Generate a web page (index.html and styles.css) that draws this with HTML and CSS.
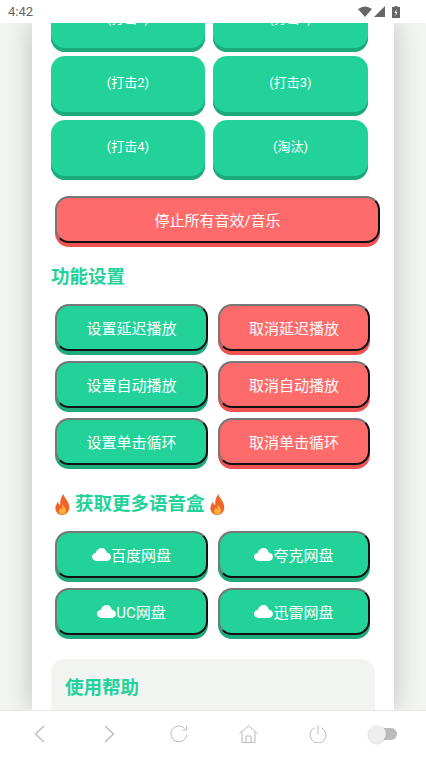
FILE: index.html
```html
<!DOCTYPE html>
<html lang="zh-CN">
  <head>
    <meta charset="UTF-8" />
    <meta name="viewport" content="width=device-width, initial-scale=1.0" />
    <title>语音盒</title>
    <link rel="stylesheet" href="styles.css">
  </head>
  <body>
    <div class="status">
      <span class="time">4:42</span>
      <div class="status-icons">
        <svg width="14" height="11" viewBox="0 0 14 11"><path d="M0 3 Q7 -2 14 3 L7 11 Z" fill="#666"/></svg>
        <svg width="11" height="11" viewBox="0 0 11 11"><path d="M11 0 V11 H0 Z" fill="#666"/></svg>
        <svg class="battery" width="8" height="12" viewBox="0 0 8 12"><path d="M2.5 0 H5.5 V1 H8 V12 H0 V1 H2.5 Z" fill="#666"/><path d="M4.5 3 L2.5 7 H3.7 L3.5 10 L5.5 6 H4.3 Z" fill="#fff"/></svg>
      </div>
    </div>

    <div class="page">
      <div class="card">
        <div class="grid sounds">
          <button class="btn big">(打击1)</button>
          <button class="btn big">(打击1)</button>
          <button class="btn big">(打击2)</button>
          <button class="btn big">(打击3)</button>
          <button class="btn big">(打击4)</button>
          <button class="btn big">(淘汰)</button>
        </div>

        <button class="btn dark red stop">停止所有音效/音乐</button>

        <h2 class="title">功能设置</h2>
        <div class="grid settings">
          <button class="btn dark">设置延迟播放</button>
          <button class="btn dark red">取消延迟播放</button>
          <button class="btn dark">设置自动播放</button>
          <button class="btn dark red">取消自动播放</button>
          <button class="btn dark">设置单击循环</button>
          <button class="btn dark red">取消单击循环</button>
        </div>

        <h2 class="title more">
          <svg class="fire" width="15" height="21" viewBox="0 0 17 22" preserveAspectRatio="none"><path d="M9.5 0 C10.5 4 15 7 16 12 C17 18 13 22 8.5 22 C3.5 22 0 18.5 0.5 14 C1 11 2.5 9.5 3.5 8 C4 10 4.5 11 6 11.5 C5.5 7 7 3 9.5 0 Z" fill="#f0662a"/><path d="M9 11 C10 14 13 15 12.5 18 C12 20.500 10.500 21.500 8.500 21.500 C6 21.500 4.500 20 4.500 18 C4.500 16 6 15.500 7 14.500 C7.500 16 8 16 8.500 16 C8 14 8 12.500 9 11 Z" fill="#fbb03b"/></svg>
          <span>获取更多语音盒</span>
          <svg class="fire" width="15" height="21" viewBox="0 0 17 22" preserveAspectRatio="none"><path d="M9.5 0 C10.5 4 15 7 16 12 C17 18 13 22 8.5 22 C3.5 22 0 18.5 0.5 14 C1 11 2.5 9.5 3.5 8 C4 10 4.5 11 6 11.5 C5.5 7 7 3 9.5 0 Z" fill="#f0662a"/><path d="M9 11 C10 14 13 15 12.5 18 C12 20.500 10.500 21.500 8.500 21.500 C6 21.500 4.500 20 4.500 18 C4.500 16 6 15.500 7 14.500 C7.500 16 8 16 8.500 16 C8 14 8 12.500 9 11 Z" fill="#fbb03b"/></svg>
        </h2>
        <div class="grid settings">
          <button class="btn dark"><svg class="cloud" width="19" height="13" viewBox="0 0 20 14" preserveAspectRatio="none"><path d="M5 14 C2 14 0 12 0 9.500 C0 7 2 5.500 4 5.500 C4.500 2.500 7 0 10 0 C13 0 15 2 15.500 5 C18 5 20 7 20 9.500 C20 12 18 14 15.500 14 Z" fill="#fff"/></svg>百度网盘</button>
          <button class="btn dark"><svg class="cloud" width="19" height="13" viewBox="0 0 20 14" preserveAspectRatio="none"><path d="M5 14 C2 14 0 12 0 9.500 C0 7 2 5.500 4 5.500 C4.500 2.500 7 0 10 0 C13 0 15 2 15.500 5 C18 5 20 7 20 9.500 C20 12 18 14 15.500 14 Z" fill="#fff"/></svg>夸克网盘</button>
          <button class="btn dark"><svg class="cloud" width="19" height="13" viewBox="0 0 20 14" preserveAspectRatio="none"><path d="M5 14 C2 14 0 12 0 9.500 C0 7 2 5.500 4 5.500 C4.500 2.500 7 0 10 0 C13 0 15 2 15.500 5 C18 5 20 7 20 9.500 C20 12 18 14 15.500 14 Z" fill="#fff"/></svg>UC网盘</button>
          <button class="btn dark"><svg class="cloud" width="19" height="13" viewBox="0 0 20 14" preserveAspectRatio="none"><path d="M5 14 C2 14 0 12 0 9.500 C0 7 2 5.500 4 5.500 C4.500 2.500 7 0 10 0 C13 0 15 2 15.500 5 C18 5 20 7 20 9.500 C20 12 18 14 15.500 14 Z" fill="#fff"/></svg>迅雷网盘</button>
        </div>

        <div class="help">
          <h2 class="title">使用帮助</h2>
        </div>
      </div>
    </div>

    <div class="nav">
      <svg width="11" height="18" viewBox="0 0 11 18"><path d="M10 1 L1.500 9 L10 17" fill="none" stroke="#bbb" stroke-width="1.300"/></svg>
      <svg width="11" height="18" viewBox="0 0 11 18"><path d="M1 1 L9.500 9 L1 17" fill="none" stroke="#bbb" stroke-width="1.300"/></svg>
      <svg width="18" height="18" viewBox="0 0 18 18"><path d="M14.800 3.500 A8 8 0 1 0 16.800 10" fill="none" stroke="#bbb" stroke-width="1"/><path d="M16.500 1 V5 H12.500" fill="none" stroke="#bbb" stroke-width="1"/></svg>
      <svg width="19" height="18" viewBox="0 0 19 18"><path d="M0.500 8.500 L9.500 0.700 L18.500 8.500 M3 6.500 V17.500 H16 V6.500 M7 17.500 V11 H12 V17.500" fill="none" stroke="#bbb" stroke-width="1"/></svg>
      <svg width="18" height="18" viewBox="0 0 18 18"><path d="M5.500 2.800 A8 8 0 1 0 12.500 2.800 M9 0.500 V9.500" fill="none" stroke="#bbb" stroke-width="1"/></svg>
      <div class="toggle"><span class="knob"></span></div>
    </div>
  </body>
</html>
```

FILE: styles.css
```css
* {
  box-sizing: border-box;
}
html,
body {
  margin: 0;
  height: 100%;
}
body {
  width: 426px;
  height: 757px;
  overflow: hidden;
  display: flex;
  flex-direction: column;
  font-family: Roboto, "Noto Sans CJK SC", sans-serif;
  background-color: #fff;
}

.status {
  height: 23px;
  flex: none;
  display: flex;
  justify-content: space-between;
  align-items: center;
  padding: 0 26px 0 8px;
  background-color: #fff;
  position: relative;
  z-index: 2;
}
.time {
  font-size: 13px;
  color: #666;
}
.status-icons {
  display: flex;
  align-items: center;
  gap: 2px;
}
.status-icons .battery {
  margin-left: 5px;
}

.page {
  flex: 1;
  overflow: hidden;
  background-color: #f2f4f2;
  padding: 0 32px;
}
.card {
  display: flow-root;
  height: 100%;
  background-color: #fff;
  box-shadow: 0 0 24px rgba(0, 0, 0, 0.22);
  padding: 0 19px;
}

.grid {
  display: grid;
  grid-template-columns: 154px 155px;
  gap: 4px 8px;
}
.sounds {
  margin-top: -31px;
}
.settings {
  grid-template-columns: 153px 152px;
  gap: 10px;
  margin-left: 4px;
}

.btn {
  display: flex;
  align-items: center;
  justify-content: center;
  border: none;
  outline: none;
  padding: 0;
  color: #fff;
  font-family: inherit;
  font-size: 15px;
  background-color: #22d298;
  border-radius: 14px;
  height: 47px;
}
.big {
  height: 60px;
  font-size: 13px;
  padding-bottom: 9px;
  box-shadow: inset 0 -4px 0 #1eaa7d;
}
.dark {
  border: 2px solid;
  border-color: #777 #111 #111 #777;
  padding-bottom: 1px;
  box-shadow: 0 4px 0 #1eaa7d;
}
.red {
  background-color: #ff6b6b;
}
.dark.red {
  box-shadow: 0 4px 0 #ee5253;
}
.stop {
  width: 325px;
  margin: 16px 0 0 4px;
}

.title {
  margin: 0;
  color: #22d298;
  font-size: 18.5px;
  line-height: 24px;
  font-weight: 700;
}
.card > .title {
  margin: 22px 0 15px;
}
.card > .more {
  display: flex;
  align-items: center;
  gap: 5px;
  margin: 27px 0 15px 4px;
}

.help {
  margin-top: 24px;
  height: 120px;
  padding: 17px 14px;
  background-color: #f2f4f2;
  border-radius: 14px;
  width: 324px;
}

.nav {
  height: 47px;
  flex: none;
  display: grid;
  grid-template-columns: repeat(6, 69.5px);
  justify-items: center;
  align-items: center;
  padding-left: 5px;
  background-color: #fff;
  border-top: 1px solid #e8e8e8;
  position: relative;
  z-index: 2;
}
.toggle {
  width: 29px;
  height: 12px;
  margin-right: 9px;
  background-color: #bbb;
  border-radius: 6px;
  position: relative;
}
.knob {
  position: absolute;
  left: 0;
  top: -3px;
  width: 18px;
  height: 18px;
  border-radius: 50%;
  background-color: #eee;
  box-shadow: 0 1px 2px rgba(0, 0, 0, 0.15);
}
```
